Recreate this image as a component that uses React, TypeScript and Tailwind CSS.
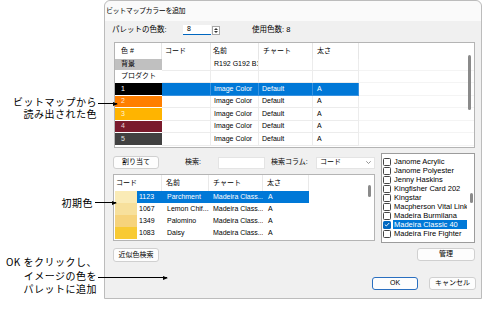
import React from "react";

const UT_COLS = "grid grid-cols-[47px_49px_48px_54px_46px_1fr]";
const LT_HEAD = "grid grid-cols-[48px_47px_54px_46px_1fr]";
const LT_COLS = "grid grid-cols-[23px_26px_47px_53px_46px_1fr]";

type URow = {
  h: string;
  sw: string;
  swText: string;
  label: string;
  name: string;
  chart: string;
  thick: string;
  sel: boolean;
};

const upperRows: URow[] = [
  { h: "h-[12px]", sw: "bg-[#c0c0c0]", swText: "text-black", label: "背景", name: "R192 G192 B1", chart: "", thick: "", sel: false },
  { h: "h-[12px]", sw: "bg-white", swText: "text-black", label: "プロダクト", name: "", chart: "", thick: "", sel: false },
  { h: "h-[13px]", sw: "bg-black", swText: "text-white", label: "1", name: "Image Color", chart: "Default", thick: "A", sel: true },
  { h: "h-[12px]", sw: "bg-[#ff7f00]", swText: "text-[#ffe9d6]", label: "2", name: "Image Color", chart: "Default", thick: "A", sel: false },
  { h: "h-[13px]", sw: "bg-[#ffb400]", swText: "text-[#fff3d6]", label: "3", name: "Image Color", chart: "Default", thick: "A", sel: false },
  { h: "h-[12px]", sw: "bg-[#7a1a2c]", swText: "text-[#e8d0d4]", label: "4", name: "Image Color", chart: "Default", thick: "A", sel: false },
  { h: "h-[13px]", sw: "bg-[#414141]", swText: "text-[#e0e0e0]", label: "5", name: "Image Color", chart: "Default", thick: "A", sel: false },
];

type LRow = { sw: string; code: string; name: string; chart: string; thick: string; sel: boolean };

const lowerRows: LRow[] = [
  { sw: "bg-[#faebb6]", code: "1123", name: "Parchment", chart: "Madeira Class...", thick: "A", sel: true },
  { sw: "bg-[#f7e09c]", code: "1067", name: "Lemon Chif...", chart: "Madeira Class...", thick: "A", sel: false },
  { sw: "bg-[#f6d37c]", code: "1349", name: "Palomino", chart: "Madeira Class...", thick: "A", sel: false },
  { sw: "bg-[#f8ca34]", code: "1083", name: "Daisy", chart: "Madeira Class...", thick: "A", sel: false },
];

const listItems: { t: string; checked: boolean }[] = [
  { t: "Janome Acrylic", checked: false },
  { t: "Janome Polyester", checked: false },
  { t: "Jenny Haskins", checked: false },
  { t: "Kingfisher Card 202", checked: false },
  { t: "Kingstar", checked: false },
  { t: "Macpherson Vital Link Rayon", checked: false },
  { t: "Madeira Burmilana", checked: false },
  { t: "Madeira Classic 40", checked: true },
  { t: "Madeira Fire Fighter", checked: false },
];

function Btn({ children, className }: { children: React.ReactNode; className: string }) {
  return (
    <div
      className={
        "flex items-center justify-center bg-[#fdfdfd] border border-[#d0d0d0] rounded-[3px] text-[7px] " + className
      }
    >
      {children}
    </div>
  );
}

function Arrow() {
  return (
    <svg width="5" height="4" viewBox="0 0 5 4" className="absolute right-[-1px] top-[-1.5px]">
      <polygon points="0,0 5,2 0,4" fill="#000" />
    </svg>
  );
}

function UpperTable() {
  const cellSep = "border-r border-b border-[#ececec]";
  return (
    <div className="relative ml-[2px] mt-[6px] w-[361px] h-[106px] border border-[#b4b4b4] bg-white text-[7px]">
      <div className={UT_COLS + " h-[16px]"}>
        <div className="flex items-center pl-[6px] border-r border-[#e6e6e6]">色 #</div>
        <div className="flex items-center pl-[3px] border-r border-[#e6e6e6]">コード</div>
        <div className="flex items-center pl-[2px] border-r border-[#e6e6e6]">名前</div>
        <div className="flex items-center pl-[4px] border-r border-[#e6e6e6]">チャート</div>
        <div className="flex items-center pl-[4px] border-r border-[#e6e6e6]">太さ</div>
        <div />
      </div>
      {upperRows.map((r, i) => (
        <div key={i} className={UT_COLS + " " + r.h}>
          <div className={"flex items-center pl-[6px] border-b border-white overflow-hidden whitespace-nowrap " + r.sw + " " + r.swText}>
            {r.label}
          </div>
          {[
            { v: "", pl: "pl-[3px]" },
            { v: r.name, pl: "pl-[3px]" },
            { v: r.chart, pl: "pl-[3px]" },
            { v: r.thick, pl: "pl-[4px]" },
          ].map((c, j) => (
            <div
              key={j}
              className={
                "flex items-center overflow-hidden whitespace-nowrap " +
                c.pl +
                " " +
                (r.sel ? "bg-[#0078d7] text-white border-r border-b border-[#3a93e0]" : cellSep)
              }
            >
              {c.v}
            </div>
          ))}
          <div className="border-b border-[#f4f4f4]" />
        </div>
      ))}
      <div className="absolute left-[353px] top-[12px] w-[3px] h-[55px] rounded-full bg-[#8a8a8a]" />
    </div>
  );
}

function LowerTable() {
  return (
    <div className="relative mt-[5px] w-[262px] h-[67px] border border-[#b4b4b4] bg-white text-[7px]">
      <div className={LT_HEAD + " h-[16px]"}>
        <div className="flex items-center pl-[2px] border-r border-[#e9e9e9]">コード</div>
        <div className="flex items-center pl-[4px] border-r border-[#e9e9e9]">名前</div>
        <div className="flex items-center pl-[4px] border-r border-[#e9e9e9]">チャート</div>
        <div className="flex items-center pl-[4px] border-r border-[#e9e9e9]">太さ</div>
        <div />
      </div>
      {lowerRows.map((r, i) => (
        <div key={i} className={LT_COLS + " h-[12px]"}>
          <div className="pl-[1px] h-full">
            <div className={"w-[22px] h-full " + r.sw} />
          </div>
          {[
            { v: r.code, pl: "pl-[2px]" },
            { v: r.name, pl: "pl-[4px]" },
            { v: r.chart, pl: "pl-[3px]" },
            { v: r.thick, pl: "pl-[5px]" },
          ].map((c, j) => (
            <div
              key={j}
              className={
                "flex items-center overflow-hidden whitespace-nowrap " +
                c.pl +
                " " +
                (r.sel ? "bg-[#0078d7] text-white" : "")
              }
            >
              {c.v}
            </div>
          ))}
          <div />
        </div>
      ))}
      <div className="absolute left-[254px] top-[10px] w-[3px] h-[12px] rounded-full bg-[#8a8a8a]" />
    </div>
  );
}

function ListBox() {
  return (
    <div className="relative w-[94px] h-[90px] border border-[#9c9c9c] bg-white pt-[3px] text-[7.5px]">
      {listItems.map((it, i) => (
        <div key={i} className="flex items-center h-[9px] pl-[1px]">
          {it.checked ? (
            <div className="w-[8px] h-[8px] rounded-[1.5px] bg-[#0067c0] flex items-center justify-center">
              <svg width="6" height="5" viewBox="0 0 6 5">
                <polyline points="0.8,2.6 2.3,4 5.2,1" fill="none" stroke="#fff" strokeWidth="0.9" />
              </svg>
            </div>
          ) : (
            <div className="w-[8px] h-[8px] rounded-[1.5px] border border-[#444] bg-white" />
          )}
          <div
            className={
              "ml-[2px] w-[74px] h-[9px] pl-[1px] flex items-center overflow-hidden whitespace-nowrap " +
              (it.checked ? "bg-[#0078d7] text-white" : "")
            }
          >
            {it.t}
          </div>
        </div>
      ))}
      <div className="absolute left-[88px] top-[39px] w-[3px] h-[10px] rounded-full bg-[#8a8a8a]" />
    </div>
  );
}

function Dialog() {
  return (
    <div className="ml-[104px] w-[378px] h-[299px] border border-[#bcbcbc] rounded-t-[6px] bg-[#f0f0f0] flex flex-col">
      <div className="h-[20px] shrink-0 bg-[#fafafa] rounded-t-[6px] flex items-center pl-[1px] text-[7px] tracking-[-0.4px]">
        ビットマップカラーを追加
      </div>
      <div className="flex flex-col pl-[7px] pr-[5px]">
        <div className="mt-[3px] h-[12px] flex items-center text-[7.5px]">
          <div className="w-[71px] whitespace-nowrap">パレットの色数:</div>
          <div className="w-[28px] h-[10px] bg-white border-b border-[#0067c0] pl-[4px] text-[7px] flex items-center">8</div>
          <div className="ml-[1px] w-[8px] h-[9px] bg-white border border-[#a8a8a8] flex flex-col items-center justify-center gap-[1px]">
            <svg width="4" height="2" viewBox="0 0 4 2">
              <polygon points="0,2 2,0 4,2" fill="#333" />
            </svg>
            <svg width="4" height="2" viewBox="0 0 4 2">
              <polygon points="0,0 4,0 2,2" fill="#333" />
            </svg>
          </div>
          <div className="ml-[32px] whitespace-nowrap">使用色数: 8</div>
        </div>

        <UpperTable />

        <div className="mt-[5px] ml-[1px] flex gap-[6px]">
          <div className="flex flex-col w-[262px]">
            <div className="mt-[3px] h-[13px] grid grid-cols-[46px_59px_47px_51px_59px] items-center text-[7px]">
              <Btn className="h-[13px]">割り当て</Btn>
              <div className="pl-[26px] whitespace-nowrap">検索:</div>
              <div className="h-[12px] bg-white border border-[#e4e4e4]" />
              <div className="pl-[6px] whitespace-nowrap">検索コラム:</div>
              <div className="h-[12px] bg-white border border-[#e4e4e4] flex items-center justify-between pl-[3px] pr-[3px]">
                <span>コード</span>
                <svg width="5" height="3" viewBox="0 0 5 3">
                  <polyline points="0.3,0.3 2.5,2.5 4.7,0.3" fill="none" stroke="#777" strokeWidth="0.8" />
                </svg>
              </div>
            </div>
            <LowerTable />
            <Btn className="mt-[7px] w-[46px] h-[14px]">近似色検索</Btn>
          </div>
          <div className="flex flex-col w-[94px]">
            <ListBox />
            <Btn className="mt-[5px] self-end w-[58px] h-[13px]">管理</Btn>
          </div>
        </div>

        <div className="mt-[15px] flex justify-end gap-[11px]">
          <div className="w-[46px] h-[13px] flex items-center justify-center bg-[#fdfdfd] border border-[#2a6fc0] rounded-[3px] text-[7px]">
            OK
          </div>
          <Btn className="w-[47px] h-[13px]">キャンセル</Btn>
        </div>
      </div>
    </div>
  );
}

export default function App() {
  return (
    <div className="relative w-[485px] h-[312px] bg-white overflow-hidden font-['Liberation_Sans','Noto_Sans_CJK_JP',sans-serif] text-black">
      <Dialog />

      <div className="absolute left-0 top-[96px] w-[97px] text-right text-[10px] leading-[12px] tracking-[0.5px] font-['Noto_Sans_CJK_JP',sans-serif]">
        ビットマップから
        <br />
        読み出された色
      </div>
      <div className="absolute left-[98px] top-[103px] w-[19px] h-px bg-black">
        <Arrow />
      </div>

      <div className="absolute left-0 top-[197px] w-[93px] text-right text-[10px] leading-[12px] tracking-[0.5px] font-['Noto_Sans_CJK_JP',sans-serif]">
        初期色
      </div>
      <div className="absolute left-[95px] top-[202px] w-[21px] h-px bg-black">
        <Arrow />
      </div>

      <div className="absolute left-0 top-[255px] w-[97px] text-right text-[10px] leading-[13.5px] tracking-[0.5px] font-['Noto_Sans_CJK_JP',sans-serif]">
        OK をクリックし、
        <br />
        イメージの色を
        <br />
        パレットに追加
      </div>
      <div className="absolute left-[98px] top-[277px] w-[69px] h-px bg-black">
        <Arrow />
      </div>
    </div>
  );
}
